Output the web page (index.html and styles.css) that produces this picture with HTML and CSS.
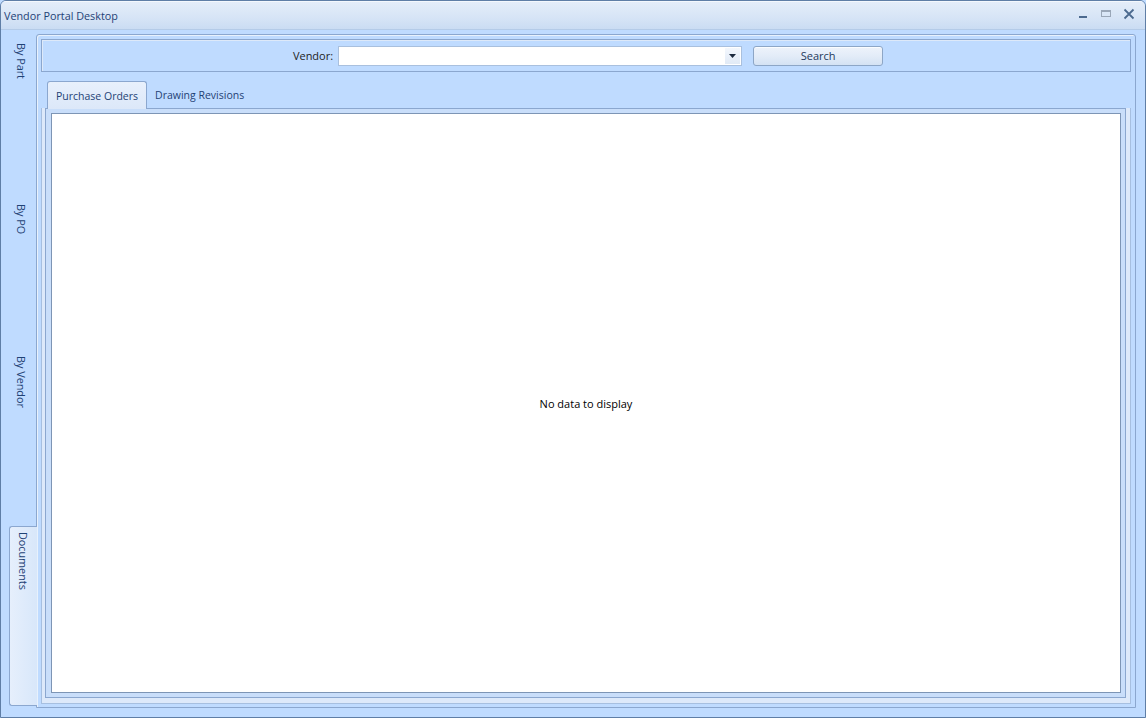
FILE: index.html
```html
<!DOCTYPE html>
<html>
<head>
<meta charset="utf-8">
<title>Vendor Portal Desktop</title>
<link rel="stylesheet" href="styles.css">
</head>
<body>
<div class="window">
  <div class="titlebar">
    <span class="title">Vendor Portal Desktop</span>
    <div class="winbtns">
      <span class="wb wb-min"><svg width="12" height="12" viewBox="0 0 12 12"><rect x="2" y="8" width="8" height="2" fill="#4c6a8f"/></svg></span>
      <span class="wb wb-max"><svg width="12" height="12" viewBox="0 0 12 12"><rect x="1.5" y="2.5" width="9" height="6" fill="none" stroke="#9aa7b8"/><rect x="1" y="2" width="10" height="2" fill="#9aa7b8"/></svg></span>
      <span class="wb wb-close"><svg width="12" height="12" viewBox="0 0 12 12"><path d="M1.5 1.5 L10.5 10.5 M10.5 1.5 L1.5 10.5" stroke="#4c6a8f" stroke-width="1.8"/></svg></span>
    </div>
  </div>
  <div class="body">
    <div class="vtabs">
      <div class="vtab t1"><span class="vlabel">By Part</span></div>
      <div class="vtab t2"><span class="vlabel">By PO</span></div>
      <div class="vtab t3"><span class="vlabel">By Vendor</span></div>
      <div class="vtab t4 selected"><span class="vlabel">Documents</span></div>
    </div>
    <div class="vpage">
      <div class="group">
        <span class="label">Vendor:</span>
        <div class="combo">
          <div class="combo-text"></div>
          <div class="combo-btn"><svg width="7" height="4" viewBox="0 0 7 4"><path d="M0 0 H7 L3.5 4 Z" fill="#1c2a3e"/></svg></div>
        </div>
        <button class="btn">Search</button>
      </div>
      <div class="htabs">
        <div class="hheaders">
          <div class="htab selected">Purchase Orders</div>
          <div class="htab">Drawing Revisions</div>
        </div>
        <div class="hframe">
          <div class="hpage">
            <div class="grid">No data to display</div>
          </div>
        </div>
      </div>
    </div>
  </div>
</div>
</body>
</html>
```
FILE: styles.css
```css
* { box-sizing: border-box; }
html, body { margin: 0; padding: 0; }
body {
  width: 1146px;
  height: 718px;
  overflow: hidden;
  background: #bfdbff;
  font-family: "Open Sans", "Liberation Sans", sans-serif;
  font-size: 11px;
}
.window {
  width: 1146px;
  height: 718px;
  border: 1px solid #5f7ea6;
  border-radius: 6px 6px 0 0;
  background: #bfdbff;
  display: flex;
  flex-direction: column;
  overflow: hidden;
}
.titlebar {
  height: 29px;
  flex: none;
  background: linear-gradient(#e4edf9, #d6e4f6 60%, #cadcf3);
  border-top: 1px solid #f4f8fd;
  border-bottom: 1px solid #b4cbe8;
  display: flex;
  align-items: center;
  padding-left: 3px;
  padding-top: 0;
}
.title {
  color: #1f4275;
  font-size: 10.8px;
}
.winbtns {
  margin-left: auto;
  display: flex;
  align-items: center;
  gap: 11px;
  padding-right: 10px;
  margin-top: -4px;
}
.wb { width: 12px; height: 12px; display: block; }
.wb svg { display: block; }
.body {
  flex: 1;
  display: flex;
  padding: 0 9px 9px 0;
}
.vtabs {
  width: 35px;
  flex: none;
  display: flex;
  flex-direction: column;
  padding-top: 5px;
}
.vtab {
  position: relative;
  display: flex;
  justify-content: center;
  color: #1f4275;
  padding-left: 4px;
}
.vlabel {
  writing-mode: vertical-rl;
  font-size: 10.8px;
  line-height: 14px;
}
.t1 { height: 161px; padding-top: 8px; }
.t2 { height: 153px; padding-top: 8px; }
.t3 { height: 177px; padding-top: 7px; }
.t4 { height: 180px; padding-top: 5px; }
.vtab.selected {
  margin-left: 8px;
  margin-right: -1px;
  border: 1px solid #8ba7cf;
  border-right: none;
  border-radius: 3px 0 0 3px;
  background: linear-gradient(90deg, #e6effc, #d8e7fa);
  z-index: 2;
  padding-left: 0;
  padding-right: 1px;
}
.vpage {
  flex: 1;
  margin-top: 4px;
  border: 1px solid #8ba7cf;
  border-radius: 3px 3px 0 0;
  box-shadow: inset 1px 1px 0 #e8f1fc;
  background: #bfdbff;
  padding: 4px 4px 3px 4px;
  display: flex;
  flex-direction: column;
}
.group {
  height: 33px;
  flex: none;
  border: 1px solid #8ba7cf;
  box-shadow: inset 1px 1px 0 #dde9f9;
  display: flex;
  align-items: center;
  justify-content: center;
  padding-left: 4px;
}
.label {
  color: #1e1e1e;
  margin-right: 5px;
}
.combo {
  width: 404px;
  height: 20px;
  background: #fff;
  border: 1px solid #a9c0de;
  display: flex;
}
.combo-text { flex: 1; }
.combo-btn {
  width: 15px;
  margin: 1px;
  background: linear-gradient(#f3f7fd, #e1eaf6);
  display: flex;
  align-items: center;
  justify-content: center;
}
.btn {
  margin-left: 11px;
  width: 130px;
  height: 20px;
  border: 1px solid #8da6c6;
  border-radius: 3px;
  background: linear-gradient(#eef3fb, #e3ecf8 50%, #d4e2f3);
  box-shadow: inset 0 1px 0 #fbfdff;
  font-family: "Open Sans", "Liberation Sans", sans-serif;
  font-size: 11px;
  color: #1e395b;
  padding: 0;
}
.htabs {
  flex: 1;
  display: flex;
  flex-direction: column;
  margin-top: 9px;
}
.hheaders {
  height: 27px;
  flex: none;
  display: flex;
  padding-left: 6px;
  position: relative;
  z-index: 2;
}
.htab {
  height: 27px;
  padding: 0 8px;
  display: flex;
  align-items: center;
  color: #1f4275;
  white-space: nowrap;
  font-size: 10.5px;
}
.htab.selected {
  height: 28px;
  padding: 0 8px 0 8px;
  border: 1px solid #8ba7cf;
  border-bottom: none;
  border-radius: 3px 3px 0 0;
  background: linear-gradient(#e8f0fc, #dce8f9);
}
.hframe {
  flex: 1;
  display: flex;
  border: 1px solid #a6bfe0;
  border-top: none;
  background: #dde9fa;
  padding: 0 4px 5px 3px;
}
.hpage {
  flex: 1;
  display: flex;
  border: 1px solid #8ba7cf;
  background: #c9defa;
  padding: 4px 4px 4px 5px;
}
.grid {
  flex: 1;
  background: #fff;
  border: 1px solid #7d95b5;
  display: flex;
  align-items: center;
  justify-content: center;
  color: #000;
}
```
